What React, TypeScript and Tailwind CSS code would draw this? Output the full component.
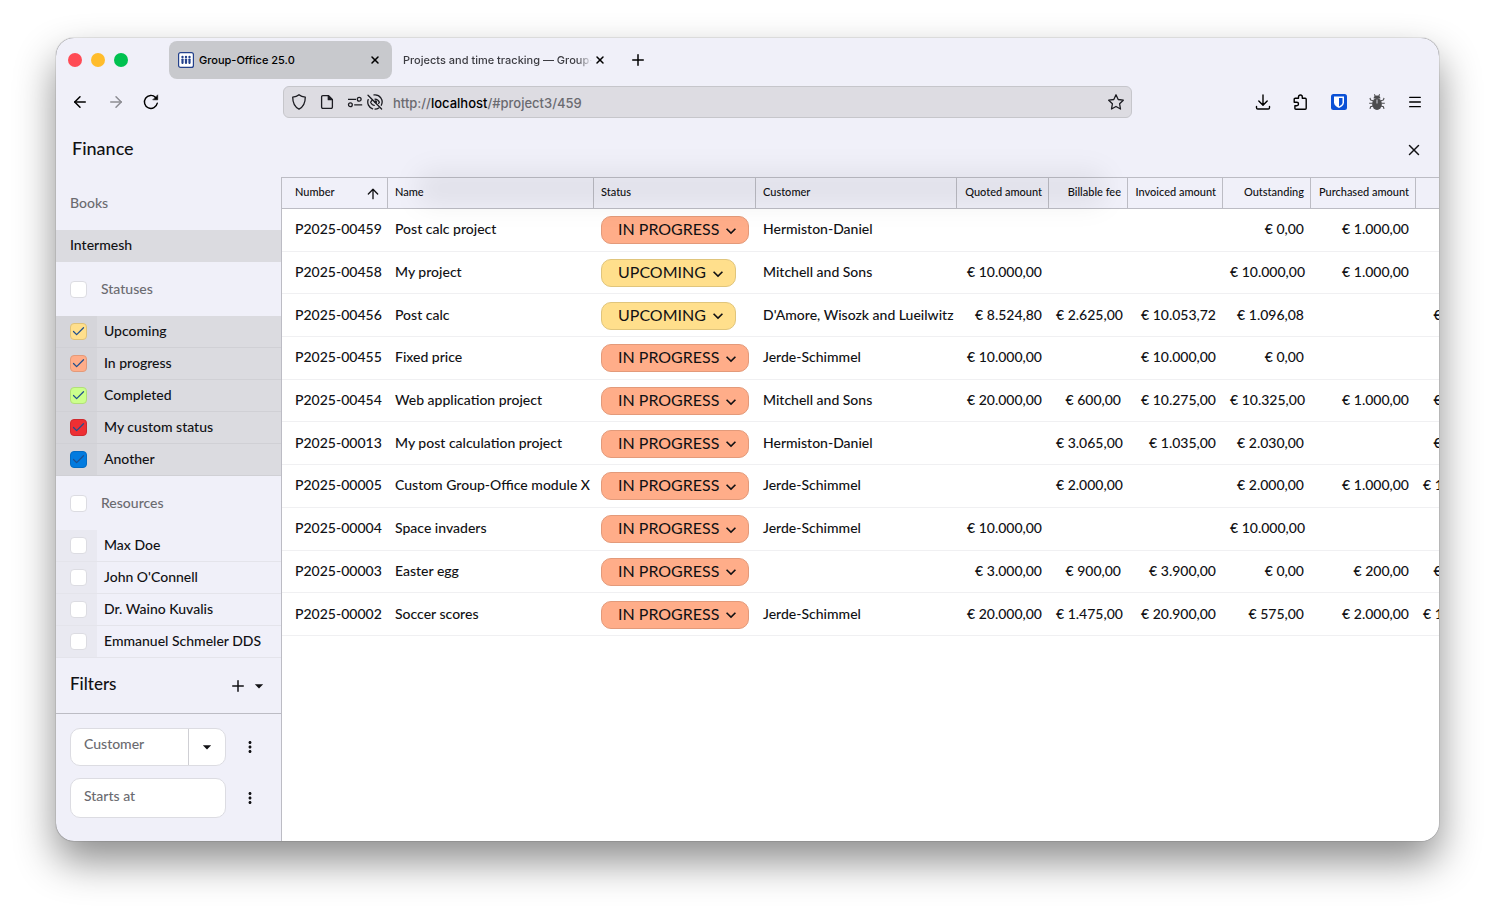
import React from 'react';
import { ArrowLeft, ArrowRight, ArrowUp, Check, Menu, Plus, X } from 'lucide-react';
import { MdArrowDropDown, MdExpandMore, MdMoreVert } from 'react-icons/md';

interface Project {
  number: string;
  name: string;
  status: 'IN PROGRESS' | 'UPCOMING';
  customer: string;
  amounts: string[];
}

const columns = [
  { label: 'Quoted amount', width: 'w-[92px]' },
  { label: 'Billable fee', width: 'w-[79px]' },
  { label: 'Invoiced amount', width: 'w-[95px]' },
  { label: 'Outstanding', width: 'w-[88px]' },
  { label: 'Purchased amount', width: 'w-[105px]' },
  { label: '', width: 'w-[80px]' },
];

const projects: Project[] = [
  { number: 'P2025-00459', name: 'Post calc project', status: 'IN PROGRESS', customer: 'Hermiston-Daniel', amounts: ['', '', '', '€ 0,00', '€ 1.000,00', ''] },
  { number: 'P2025-00458', name: 'My project', status: 'UPCOMING', customer: 'Mitchell and Sons', amounts: ['€ 10.000,00', '', '', '€ 10.000,00', '€ 1.000,00', ''] },
  { number: 'P2025-00456', name: 'Post calc', status: 'UPCOMING', customer: "D'Amore, Wisozk and Lueilwitz", amounts: ['€ 8.524,80', '€ 2.625,00', '€ 10.053,72', '€ 1.096,08', '', '€ 900,00'] },
  { number: 'P2025-00455', name: 'Fixed price', status: 'IN PROGRESS', customer: 'Jerde-Schimmel', amounts: ['€ 10.000,00', '', '€ 10.000,00', '€ 0,00', '', ''] },
  { number: 'P2025-00454', name: 'Web application project', status: 'IN PROGRESS', customer: 'Mitchell and Sons', amounts: ['€ 20.000,00', '€ 600,00', '€ 10.275,00', '€ 10.325,00', '€ 1.000,00', '€ 600,00'] },
  { number: 'P2025-00013', name: 'My post calculation project', status: 'IN PROGRESS', customer: 'Hermiston-Daniel', amounts: ['', '€ 3.065,00', '€ 1.035,00', '€ 2.030,00', '', '€ 800,00'] },
  { number: 'P2025-00005', name: 'Custom Group-Office module X', status: 'IN PROGRESS', customer: 'Jerde-Schimmel', amounts: ['', '€ 2.000,00', '', '€ 2.000,00', '€ 1.000,00', '€ 1.000,00'] },
  { number: 'P2025-00004', name: 'Space invaders', status: 'IN PROGRESS', customer: 'Jerde-Schimmel', amounts: ['€ 10.000,00', '', '', '€ 10.000,00', '', ''] },
  { number: 'P2025-00003', name: 'Easter egg', status: 'IN PROGRESS', customer: '', amounts: ['€ 3.000,00', '€ 900,00', '€ 3.900,00', '€ 0,00', '€ 200,00', '€ 400,00'] },
  { number: 'P2025-00002', name: 'Soccer scores', status: 'IN PROGRESS', customer: 'Jerde-Schimmel', amounts: ['€ 20.000,00', '€ 1.475,00', '€ 20.900,00', '€ 575,00', '€ 2.000,00', '€ 1.200,00'] },
];

const statuses = [
  { label: 'Upcoming', box: 'bg-[#ffdf8c] border-[#dfc27a]' },
  { label: 'In progress', box: 'bg-[#ffad89] border-[#e39a7a]' },
  { label: 'Completed', box: 'bg-[#ccff8c] border-[#b2df7a]' },
  { label: 'My custom status', box: 'bg-[#ee2f33] border-[#cf292d]' },
  { label: 'Another', box: 'bg-[#027bdf] border-[#026bc4]' },
];

const resources = ['Max Doe', "John O'Connell", 'Dr. Waino Kuvalis', 'Emmanuel Schmeler DDS'];

function ShieldIcon() {
  return (
    <svg className="w-4 h-4" viewBox="0 0 16 16" fill="none" stroke="currentColor" strokeWidth="1.3" strokeLinejoin="round">
      <path d="M8 .8c1.700 1.500 4 2.200 6.300 2.300 0 5.400-1.800 9.900-6.300 12.100C3.500 13 1.700 8.500 1.700 3.100 4 3 6.300 2.300 8 .8Z" />
    </svg>
  );
}

function PageIcon() {
  return (
    <svg className="w-4 h-4" viewBox="0 0 16 16" fill="none" stroke="currentColor" strokeWidth="1.3" strokeLinejoin="round">
      <path d="M9.500 1.700H3.800a1.200 1.200 0 0 0-1.200 1.200v10.200a1.200 1.200 0 0 0 1.200 1.200h8.400a1.200 1.200 0 0 0 1.200-1.200V5.600Z" />
      <path d="M9.300 1.700v4h4.100Z" fill="currentColor" />
    </svg>
  );
}

function PermissionsIcon() {
  return (
    <svg className="w-4 h-4" viewBox="0 0 16 16" fill="none" stroke="currentColor" strokeWidth="1.3">
      <path d="M1 5.300h8M7.200 10.800h8" />
      <circle cx="12.200" cy="5.300" r="1.900" />
      <circle cx="3.400" cy="10.800" r="1.900" />
    </svg>
  );
}

function EyeOffIcon() {
  return (
    <svg className="w-4 h-4" viewBox="0 0 16 16" fill="none" stroke="currentColor" strokeWidth="1.300" strokeLinecap="round">
      <path d="M7 .9a7.100 7.100 0 0 1 7.300 10.300M11.800 14a7.100 7.100 0 0 1-3.800 1.100" />
      <path d="M1.200 5.600A7.100 7.100 0 0 0 5.600 14.800" />
      <path d="M3.700 8.300c.4-.9.900-1.500 1.500-2M8 5.100c2 .1 3.500 1.200 4.400 3.100-.2.500-.5.900-.8 1.200" />
      <path d="M4.200 9.300c.7 1.100 1.700 1.800 3 2" />
      <circle cx="8.600" cy="7.700" r="1.500" fill="currentColor" stroke="none" />
      <path d="M1 1.200 14.600 15" />
    </svg>
  );
}

function StarIcon() {
  return (
    <svg className="w-[18px] h-[18px]" viewBox="0 0 18 18" fill="none" stroke="currentColor" strokeWidth="1.300" strokeLinejoin="round">
      <path d="m9 1.800 2.200 4.700 5.100.7-3.700 3.600.9 5.200L9 13.500 4.500 16l.9-5.200L1.700 7.200l5.100-.7Z" />
    </svg>
  );
}

function ReloadIcon() {
  return (
    <svg className="w-4 h-4" viewBox="0 0 16 16" fill="none" stroke="currentColor" strokeWidth="1.400" strokeLinecap="round">
      <path d="M14.300 9.200A6.500 6.500 0 1 1 12.600 3.400" />
      <path d="M14.700 1.200v4.600h-4.600Z" fill="currentColor" strokeWidth=".6" strokeLinejoin="round" />
    </svg>
  );
}

function DownloadIcon() {
  return (
    <svg className="w-4 h-4" viewBox="0 0 16 16" fill="none" stroke="currentColor" strokeWidth="1.400" strokeLinecap="round" strokeLinejoin="round">
      <path d="M8 1v10M3.800 7 8 11.200 12.200 7M1.500 12.500v1.200c0 .8.500 1.300 1.300 1.300h10.400c.8 0 1.300-.5 1.300-1.300v-1.200" />
    </svg>
  );
}

function PuzzleIcon() {
  return (
    <svg className="w-4 h-4" viewBox="0 0 16 16" fill="none" stroke="currentColor" strokeWidth="1.400" strokeLinejoin="round">
      <path d="M5.500 4.300V2.900a1.900 1.900 0 0 1 3.800 0v1.400h2.900c.6 0 1 .4 1 1v8.900c0 .6-.4 1-1 1H2.900c-.6 0-1-.4-1-1v-2.500h1.900a1.700 1.700 0 0 0 0-3.400H1.200V5.300c0-.6.4-1 1-1Z" />
    </svg>
  );
}

function BitwardenIcon() {
  return (
    <svg className="w-4 h-4" viewBox="0 0 16 16">
      <rect width="16" height="16" rx="2.500" fill="#0b51d6" />
      <path d="M3 2.500h10v6c0 2.600-2.300 4.300-5 5.500-2.700-1.200-5-2.900-5-5.500Z" fill="#fff" />
      <path d="M8 3.900h3.500v4.600c0 1.700-1.500 2.800-3.500 3.900Z" fill="#0b51d6" />
    </svg>
  );
}

function BugIcon() {
  return (
    <svg className="w-4 h-4 text-[#4b4b4d]" viewBox="0 0 16 16" fill="none" stroke="currentColor" strokeWidth="1.100">
      <ellipse cx="8" cy="10" rx="4.900" ry="6" fill="currentColor" stroke="none" />
      <path d="M4.600 4.600a3.400 3.200 0 0 1 6.800 0Z" fill="currentColor" stroke="none" />
      <path d="M6.300 2 5.300.4M9.700 2l1-1.600M4 6.700 1.500 5.900 1 3.800M12 6.700l2.500-.8.5-2.100M3.500 9.300H.2M12.500 9.300h3.300M4 12l-2.400.8-.6 2M12 12l2.400.8.6 2" />
      <path d="M8 5.500v4" stroke="#c9c9d0" />
    </svg>
  );
}

function GroupOfficeLogo() {
  return (
    <svg className="w-4 h-4 shrink-0" viewBox="0 0 16 16" fill="#23418c">
      <rect x=".6" y=".6" width="14.800" height="14.800" rx="2" fill="#fff" stroke="#23418c" strokeWidth="1.200" />
      <circle cx="4.500" cy="4.900" r="1.200" />
      <circle cx="8" cy="4.900" r="1.200" />
      <circle cx="11.500" cy="4.900" r="1.200" />
      <rect x="3.400" y="6.500" width="2.200" height="5.400" rx=".8" />
      <rect x="6.900" y="6.500" width="2.200" height="5.400" rx=".8" />
      <rect x="10.400" y="6.500" width="2.200" height="5.400" rx=".8" />
    </svg>
  );
}

function Checkbox({ id, box, checked = false }: { id: string; box?: string; checked?: boolean }) {
  return (
    <span className="relative flex w-[17px] h-[17px] shrink-0">
      <input
        id={id}
        type="checkbox"
        defaultChecked={checked}
        className={`appearance-none w-full h-full rounded-[4px] border ${box ?? 'bg-white border-[#dcdce2]'}`}
      />
      {checked && <Check className="absolute inset-0 m-auto w-[15px] h-[15px] text-[#1f4f8f] pointer-events-none" strokeWidth={2} />}
    </span>
  );
}

function BrowserBar() {
  return (
    <header className="font-['Inter',sans-serif] text-black">
      {/* Tabs */}
      <div className="flex items-center h-11 pl-3">
        <div className="flex gap-[9px] w-[101px]">
          <span className="w-[14px] h-[14px] rounded-full bg-[#ff4b55]"></span>
          <span className="w-[14px] h-[14px] rounded-full bg-[#ffbc2b]"></span>
          <span className="w-[14px] h-[14px] rounded-full bg-[#00c150]"></span>
        </div>
        <div className="flex items-center w-[223px] h-[38px] rounded-lg bg-[#c8c9cd] pl-[9px] pr-[11px] gap-[5px] text-[11px]">
          <GroupOfficeLogo />
          <span className="flex-1">Group-Office 25.0</span>
          <button aria-label="Close tab"><X className="w-3 h-3" strokeWidth={3} /></button>
        </div>
        <div className="flex items-center w-[214px] gap-[2px] pl-[11px] text-[11px] text-[#3c3c42]">
          <span className="w-[190px] overflow-hidden whitespace-nowrap [mask-image:linear-gradient(to_right,#000_92%,transparent)]">
            Projects and time tracking — Group-Office
          </span>
          <button aria-label="Close tab" className="text-black"><X className="w-3 h-3" strokeWidth={3} /></button>
        </div>
        <button aria-label="New tab" className="ml-[23px]"><Plus className="w-[18px] h-[18px]" strokeWidth={2} /></button>
      </div>

      {/* Toolbar */}
      <div className="flex items-center h-10 pl-[15px] pr-4">
        <div className="flex items-center gap-[18px] w-[212px]">
          <button aria-label="Back"><ArrowLeft className="w-[18px] h-[18px]" strokeWidth={2} /></button>
          <button aria-label="Forward" className="text-[#8d8d93]"><ArrowRight className="w-[18px] h-[18px]" strokeWidth={2} /></button>
          <button aria-label="Reload"><ReloadIcon /></button>
        </div>
        <div className="flex items-center flex-1 h-8 rounded-md border border-[#c6c6cb] bg-[#dddce2] px-[6px] text-[#1c1c22]">
          <span className="ml-px"><ShieldIcon /></span>
          <span className="ml-3"><PageIcon /></span>
          <span className="ml-3"><PermissionsIcon /></span>
          <span className="ml-1"><EyeOffIcon /></span>
          <span className="ml-[10px] pt-[3px] flex-1 text-[13px] text-[#6a6a70]">
            http://<span className="text-black">localhost</span>/#project3/459
          </span>
          <button aria-label="Bookmark"><StarIcon /></button>
        </div>
        <div className="flex items-center justify-between w-[168px] ml-[123px]">
          <button aria-label="Downloads"><DownloadIcon /></button>
          <button aria-label="Extensions"><PuzzleIcon /></button>
          <button aria-label="Bitwarden"><BitwardenIcon /></button>
          <button aria-label="Debugger"><BugIcon /></button>
          <button aria-label="Menu"><Menu className="w-4 h-4" strokeWidth={2} /></button>
        </div>
      </div>
    </header>
  );
}

function Sidebar() {
  return (
    <aside className="w-[226px] shrink-0 border-r border-[#bcbcc4] text-sm">
      <h2 className="flex items-center h-[53px] px-[14px] pb-px text-[#6b6b70]">Books</h2>
      <div className="flex items-center h-8 px-[14px] pb-[2px] bg-[#dbdbe0]">Intermesh</div>

      <label className="flex items-center gap-[14px] h-[54px] px-[14px] text-[#6b6b70]">
        <Checkbox id="all-statuses" />
        Statuses
      </label>
      <ul>
        {statuses.map((status) => (
          <li key={status.label}>
            <label className="flex items-center h-8 border-b border-[#d0d0d5] bg-[#dbdbe0]">
              <span className="flex items-center w-[41px] h-full pl-[14px] bg-[#d5d5da]">
                <Checkbox id={status.label} box={status.box} checked />
              </span>
              <span className="pl-[7px] pb-[2px]">{status.label}</span>
            </label>
          </li>
        ))}
      </ul>

      <label className="flex items-center gap-[14px] h-[54px] px-[14px] text-[#6b6b70]">
        <Checkbox id="all-resources" />
        Resources
      </label>
      <ul>
        {resources.map((name) => (
          <li key={name}>
            <label className="flex items-center h-8 border-b border-[#e4e4eb]">
              <span className="flex items-center w-[41px] h-full pl-[14px] bg-[#e9e9f1]">
                <Checkbox id={name} />
              </span>
              <span className="pl-[7px] pb-[2px]">{name}</span>
            </label>
          </li>
        ))}
      </ul>

      {/* Filters */}
      <div className="flex items-center h-14 pl-[14px] pr-3 border-b border-[#bcbcc4]">
        <h2 className="flex-1 pb-[2px] text-[17px]">Filters</h2>
        <button aria-label="Add filter"><Plus className="w-[18px] h-[18px]" strokeWidth={2} /></button>
        <button aria-label="Filter menu" className="ml-[2px]"><MdArrowDropDown className="w-5 h-5" /></button>
      </div>
      <div className="flex flex-col gap-3 p-[14px]">
        <div className="flex items-center gap-[15px]">
          <div className="flex w-[156px] h-[38px] rounded-[10px] border border-[#dcdce2] bg-white overflow-hidden">
            <input aria-label="Customer" placeholder="Customer" className="flex-1 min-w-0 px-[13px] pb-[6px] placeholder:text-[#6b6b70] outline-none" />
            <button aria-label="Open customer list" className="flex items-center justify-center w-[37px] border-l border-[#cfcfd4]">
              <MdArrowDropDown className="w-5 h-5" />
            </button>
          </div>
          <button aria-label="Customer options"><MdMoreVert className="w-[18px] h-[18px]" /></button>
        </div>
        <div className="flex items-center gap-[15px]">
          <input aria-label="Starts at" placeholder="Starts at" className="w-[156px] h-10 rounded-[10px] border border-[#dcdce2] bg-white px-[13px] pb-[6px] placeholder:text-[#6b6b70] outline-none" />
          <button aria-label="Starts at options"><MdMoreVert className="w-[18px] h-[18px]" /></button>
        </div>
      </div>
    </aside>
  );
}

function StatusButton({ status }: { status: Project['status'] }) {
  const color = status === 'UPCOMING' ? 'bg-[#ffdf8c] border-[#e0c57c]' : 'bg-[#ffad89] border-[#e39a7a]';
  return (
    <button className={`flex items-center h-7 rounded-[10px] border pl-4 pr-[7px] gap-[2px] text-base leading-6 font-normal ${color}`}>
      <span className="pb-[2px]">{status}</span>
      <MdExpandMore className="w-5 h-5 mt-px" />
    </button>
  );
}

function ProjectTable() {
  return (
    <main className="flex-1 min-w-0 overflow-hidden bg-white">
      <table className="table-fixed border-separate border-spacing-0 w-[1214px] h-[459px] text-sm whitespace-nowrap">
        <thead>
          <tr className="h-8 text-[11px] text-left bg-[#f0f0f9] [&>th]:font-medium [&>th]:border-y [&>th]:border-r [&>th]:border-[#bcbcc4] [&>th]:pl-[7px] [&>th]:pr-[6px] [&>th]:pb-[2px]">
            <th className="w-[106px]">
              <span className="flex items-center justify-between pl-[6px]">
                Number
                <ArrowUp className="w-4 h-4 mt-1" strokeWidth={2} />
              </span>
            </th>
            <th className="w-[206px]">Name</th>
            <th className="w-[162px]">Status</th>
            <th className="w-[201px]">Customer</th>
            {columns.map((column, i) => (
              <th key={i} className={`text-right ${column.width}`}>{column.label}</th>
            ))}
          </tr>
        </thead>
        <tbody>
          {projects.map((project) => (
            <tr key={project.number} className="h-[42px] [&>td]:border-b [&>td]:border-[#f0f0f2] [&>td]:px-[7px] [&>td]:pb-px">
              <td><span className="pl-[6px]">{project.number}</span></td>
              <td>{project.name}</td>
              <td className="pt-[2px]"><StatusButton status={project.status} /></td>
              <td>{project.customer}</td>
              {project.amounts.map((amount, i) => (
                <td key={i} className="text-right">{amount}</td>
              ))}
            </tr>
          ))}
        </tbody>
      </table>
    </main>
  );
}

export default function App() {
  return (
    <div className="flex min-h-screen bg-white px-14 pt-[38px] pb-[74px] font-['Lato',sans-serif] font-medium text-[#111114]">
      <div className="flex flex-col flex-1 min-w-0 rounded-[18px] overflow-hidden bg-[#f0f0f9] shadow-[0_0_1px_rgba(0,0,0,0.8),0_20px_40px_rgba(0,0,0,0.45)]">
        <BrowserBar />
        <div className="relative flex items-center justify-between h-[55px] px-4">
          <h1 className="pb-1 text-lg">Finance</h1>
          <button aria-label="Close"><X className="w-[18px] h-[18px]" strokeWidth={2} /></button>
          {/* Soft shade that falls over the top of the grid */}
          <div className="absolute top-12 left-[26%] right-[24%] h-9 rounded-full bg-black/6 blur-[12px] pointer-events-none"></div>
        </div>
        <div className="flex flex-1">
          <Sidebar />
          <ProjectTable />
        </div>
      </div>
    </div>
  );
}
